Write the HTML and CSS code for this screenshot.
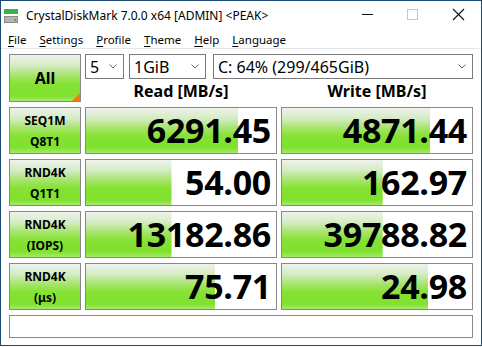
FILE: index.html
```html
<!DOCTYPE html>
<html lang="en">
<head>
    <meta charset="UTF-8">
    <title>CrystalDiskMark</title>
    <link rel="stylesheet" href="styles.css">
</head>
<body>
    <div class="window">
        <div class="titlebar">
            <svg class="app-icon" width="14" height="14" viewBox="0 0 14 14">
                <rect x="0" y="0" width="14" height="5" fill="#3cb34a"/>
                <rect x="0" y="7" width="14" height="7" fill="#8a8a8a"/>
                <rect x="1" y="8" width="12" height="5" fill="#b4b4b4"/>
                <rect x="10" y="10" width="2" height="2" fill="#3cb34a"/>
            </svg>
            <span class="title">CrystalDiskMark 7.0.0 x64 [ADMIN] &lt;PEAK&gt;</span>
            <div class="controls">
                <svg width="46" height="29" viewBox="0 0 46 29"><rect x="19" y="13" width="11" height="1" fill="#111"/></svg>
                <svg width="46" height="29" viewBox="0 0 46 29"><rect x="18.5" y="8.5" width="10" height="10" fill="none" stroke="#c8c8c8" stroke-width="1"/></svg>
                <svg width="46" height="29" viewBox="0 0 46 29"><path d="M18 8 L29 19 M29 8 L18 19" stroke="#111" stroke-width="1.1"/></svg>
            </div>
        </div>
        <div class="menubar">
            <span><u>F</u>ile</span>
            <span><u>S</u>ettings</span>
            <span><u>P</u>rofile</span>
            <span><u>T</u>heme</span>
            <span><u>H</u>elp</span>
            <span><u>L</u>anguage</span>
        </div>
        <div class="main">
            <div class="top">
                <div class="all-btn">All</div>
                <div class="top-right">
                    <div class="selects">
                        <div class="select count">5<svg class="chev" width="8" height="5" viewBox="0 0 8 5"><path d="M0.5 0.5 L4 4 L7.5 0.5" fill="none" stroke="#666"/></svg></div>
                        <div class="select size">1GiB<svg class="chev" width="8" height="5" viewBox="0 0 8 5"><path d="M0.5 0.5 L4 4 L7.5 0.5" fill="none" stroke="#666"/></svg></div>
                        <div class="select drive">C: 64% (299/465GiB)<svg class="chev" width="8" height="5" viewBox="0 0 8 5"><path d="M0.5 0.5 L4 4 L7.5 0.5" fill="none" stroke="#666"/></svg></div>
                    </div>
                    <div class="headers">
                        <div class="hdr">Read [MB/s]</div>
                        <div class="hdr">Write [MB/s]</div>
                    </div>
                </div>
            </div>

            <div class="row">
                <div class="label">SEQ1M<br>Q8T1</div>
                <div class="value" style="background-size: 80% 100%">6291.45</div>
                <div class="value" style="background-size: 78% 100%">4871.44</div>
            </div>
            <div class="row">
                <div class="label">RND4K<br>Q1T1</div>
                <div class="value" style="background-size: 45% 100%">54.00</div>
                <div class="value" style="background-size: 53% 100%">162.97</div>
            </div>
            <div class="row">
                <div class="label">RND4K<br>(IOPS)</div>
                <div class="value" style="background-size: 45% 100%">13182.86</div>
                <div class="value" style="background-size: 53% 100%">39788.82</div>
            </div>
            <div class="row">
                <div class="label">RND4K<br>(μs)</div>
                <div class="value" style="background-size: 68% 100%">75.71</div>
                <div class="value" style="background-size: 77% 100%">24.98</div>
            </div>

            <div class="comment"></div>
        </div>
    </div>
</body>
</html>
```

FILE: styles.css
```css
* {
    margin: 0;
    padding: 0;
    box-sizing: border-box;
}

body {
    width: 482px;
    height: 347px;
    background-color: #ffffff;
    font-family: 'Noto Sans', sans-serif;
    color: #000;
    overflow: hidden;
}

.window {
    width: 482px;
    height: 346px;
    border: 1px solid #1c4b72;
    background-color: #ffffff;
}

.titlebar {
    height: 29px;
    display: flex;
    align-items: center;
}

.app-icon {
    margin-left: 3px;
    margin-right: 8px;
}

.title {
    font-size: 12px;
    flex: 1;
    margin-top: -1px;
}

.controls {
    display: flex;
    margin-right: 0;
}

.controls svg {
    display: block;
}

.menubar {
    height: 19px;
    display: flex;
    gap: 13px;
    padding-left: 7px;
    font-size: 11.5px;
    align-items: center;
    border-bottom: 1px solid #e6e6e6;
}

.menubar u {
    text-underline-offset: 2px;
}

.main {
    padding: 5px 8px 0 8px;
    display: flex;
    flex-direction: column;
    gap: 5px;
}

.top {
    display: flex;
    gap: 4px;
}

.all-btn,
.label {
    position: relative;
    width: 72px;
    border: 1px solid #888;
    background: linear-gradient(to bottom, #eef2ec 0%, #d6ecc6 22%, #a6e46c 45%, #86e234 62%, #80e12e 88%, #a4ea6a 100%);
    font-weight: 700;
    display: flex;
    align-items: center;
    justify-content: center;
    text-align: center;
}

.all-btn {
    height: 48px;
    font-size: 16px;
}

.all-btn::after {
    content: "";
    position: absolute;
    right: 0;
    bottom: 0;
    border-style: solid;
    border-width: 0 0 8px 8px;
    border-color: transparent transparent #f47a10 transparent;
}

.top-right {
    width: 388px;
    display: flex;
    flex-direction: column;
}

.selects {
    display: flex;
    height: 25px;
    gap: 5px;
}

.select {
    border: 1px solid #7a7a7a;
    background-color: #fff;
    font-size: 16px;
    display: flex;
    align-items: center;
    justify-content: space-between;
    padding: 0 6px 0 4px;
}

.chev {
    display: block;
}

.select.count {
    width: 39px;
}

.select.size {
    width: 77px;
    margin-right: 2px;
}

.select.drive {
    width: 260px;
}

.headers {
    display: flex;
    gap: 4px;
    height: 23px;
}

.hdr {
    width: 192px;
    text-align: center;
    font-weight: 700;
    font-size: 16px;
    line-height: 25px;
}

.row {
    display: flex;
    gap: 4px;
    height: 47px;
}

.label {
    font-size: 12px;
    line-height: 21px;
    padding-top: 1px;
}

.value {
    width: 192px;
    border: 1px solid #888;
    background-color: #fff;
    background-image: linear-gradient(to bottom, #eef2ec 0%, #d6ecc6 22%, #a6e46c 45%, #86e234 62%, #80e12e 88%, #a4ea6a 100%);
    background-repeat: no-repeat;
    font-family: 'Open Sans', sans-serif;
    font-weight: 700;
    font-size: 34px;
    text-align: right;
    padding-right: 5px;
    line-height: 45px;
    letter-spacing: -0.3px;
}

.comment {
    height: 23px;
    border: 1px solid #888;
    background-color: #fff;
}
```
